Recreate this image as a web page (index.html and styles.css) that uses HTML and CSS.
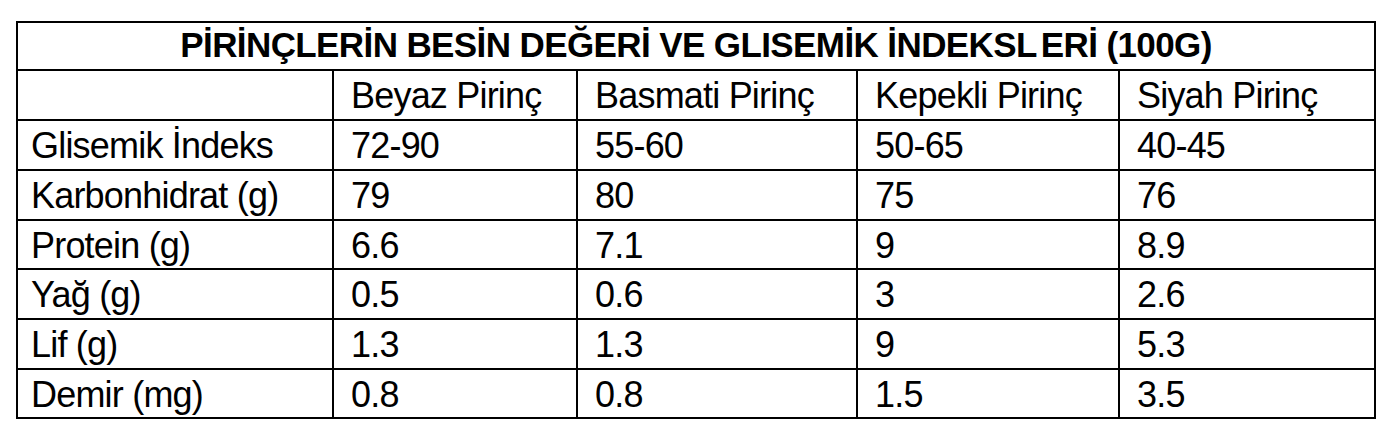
FILE: index.html
```
<!DOCTYPE html>
<html lang="tr">
<head>
<meta charset="utf-8">
<title>Pirinçlerin Besin Değeri</title>
<link rel="stylesheet" href="styles.css">
</head>
<body>
<table class="rice">
  <colgroup>
    <col class="c1"><col class="c2"><col class="c3"><col class="c4"><col class="c5">
  </colgroup>
  <tr class="title-row"><th colspan="5" class="title">PİRİNÇLERİN BESİN DEĞERİ VE GLISEMİK İNDEKS<span class="kern">L</span>ERİ (100G)</th></tr>
  <tr><td></td><td>Beyaz Pirinç</td><td>Basmati Pirinç</td><td>Kepekli Pirinç</td><td>Siyah Pirinç</td></tr>
  <tr><td>Glisemik İndeks</td><td>72-90</td><td>55-60</td><td>50-65</td><td>40-45</td></tr>
  <tr><td>Karbonhidrat (g)</td><td>79</td><td>80</td><td>75</td><td>76</td></tr>
  <tr class="short"><td>Protein (g)</td><td>6.6</td><td>7.1</td><td>9</td><td>8.9</td></tr>
  <tr><td>Yağ (g)</td><td>0.5</td><td>0.6</td><td>3</td><td>2.6</td></tr>
  <tr><td>Lif (g)</td><td>1.3</td><td>1.3</td><td>9</td><td>5.3</td></tr>
  <tr class="short"><td>Demir (mg)</td><td>0.8</td><td>0.8</td><td>1.5</td><td>3.5</td></tr>
</table>
</body>
</html>
```
FILE: styles.css
```
html, body {
  margin: 0;
  background: #fff;
}
body {
  padding: 21px 0 0 16px;
  font-family: "Liberation Sans", Arial, sans-serif;
  color: #000;
}
.rice {
  border-collapse: collapse;
  table-layout: fixed;
  width: 1360px;
}
.c1 { width: 316px; }
.c2 { width: 244px; }
.c3 { width: 280px; }
.c4 { width: 262px; }
.c5 { width: 256px; }
.rice td, .rice th {
  border: 2px solid #000;
  height: 50px;
  box-sizing: border-box;
  padding: 7px 0 0 17px;
  vertical-align: top;
  text-align: left;
  font-size: 36px;
  line-height: 36px;
  font-weight: normal;
  letter-spacing: -0.8px;
  white-space: nowrap;
}
.rice td:first-child {
  padding-left: 13px;
}
.rice tr.short td {
  height: 49px;
}
.rice th.title {
  height: 48px;
  padding: 4px 0 0 0;
  text-align: center;
  font-weight: bold;
  font-size: 35px;
  line-height: 35px;
  letter-spacing: -0.6px;
}
.kern {
  margin-right: 4px;
}
```
